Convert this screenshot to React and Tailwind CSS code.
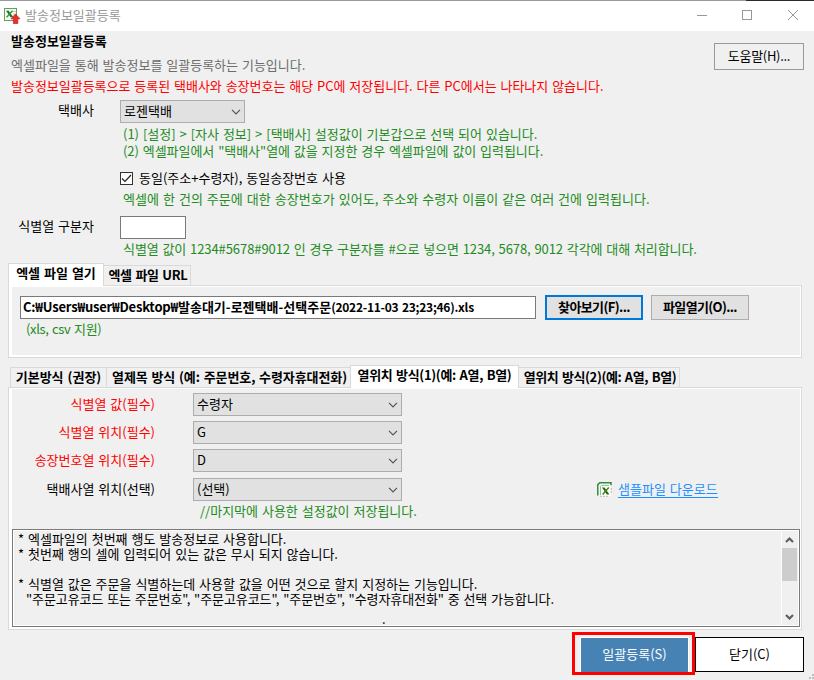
import React from "react";
import clsx from "clsx";

function Line({ className, children }) {
  return (
    <div className={clsx("h-4 leading-4 whitespace-pre", className)}>{children}</div>
  );
}

function Chevron() {
  return (
    <svg width="10" height="6" viewBox="0 0 10 6" fill="none" stroke="#555" strokeWidth="1.2">
      <path d="M1 0.8L5 4.8L9 0.8" />
    </svg>
  );
}

function Select({ className, children }) {
  return (
    <div
      className={clsx(
        "flex h-[23px] shrink-0 items-center justify-between border border-[#adadad] bg-[#e1e1e1] pr-[3px] pl-[3px]",
        className
      )}
    >
      <span className="pb-0.5">{children}</span>
      <Chevron />
    </div>
  );
}

function ExcelUploadIcon() {
  return (
    <svg width="17" height="17" viewBox="0 0 17 17">
      <rect x="0.5" y="0.5" width="12" height="12" fill="#f4faf2" stroke="#5ba35b" />
      <path d="M9 3.5h3M9 6h3" stroke="#b9d8b6" />
      <path d="M2 2.8H4.6L9.3 9.3H6.7Z" fill="#1f6b1f" />
      <path d="M8.6 2.8L2.6 9.3" stroke="#3f9440" strokeWidth="1.4" />
      <path d="M11.5 6L16 10.8H13.8V15.5H9.4V10.8H7Z" fill="#e5332a" stroke="#b5120d" strokeWidth="0.6" />
    </svg>
  );
}

function ExcelIcon() {
  return (
    <svg width="15" height="15" viewBox="0 0 15 15">
      <path d="M2.5 0.8H14V14H0.8V2.5Z" fill="#fff" />
      <path d="M0.8 13.5V2.6L2.8 0.8H14V3.2" fill="none" stroke="#2f8a3c" strokeWidth="1.5" />
      <path d="M3.4 13V4.4L4.6 3.3H12" fill="none" stroke="#7fb88a" />
      <path d="M5 5.5H7.6L12.4 12.6H9.8Z" fill="#2c6b10" />
      <path d="M11.8 5.5L5.6 12.6" stroke="#3f8420" strokeWidth="1.5" />
      <path d="M3 14.2H12M14.2 6V12" fill="none" stroke="#b5b5b5" strokeDasharray="2 1" />
    </svg>
  );
}

function FieldRow({ label, value, required, className }) {
  return (
    <div className={clsx("flex items-center", className)}>
      <span className={clsx("w-[143px] pb-0.5 text-right", required && "text-[#ff0000]")}>{label}</span>
      <Select className="ml-[38px] w-[209px]">{value}</Select>
    </div>
  );
}

function Tab({ active, className, children }) {
  return (
    <div
      className={clsx(
        "flex shrink-0 justify-center border border-b-0 border-[#d9d9d9] pt-px font-bold whitespace-pre",
        active ? "z-10 -mb-px bg-white" : "bg-[#f0f0f0]",
        className
      )}
    >
      {children}
    </div>
  );
}

export default function App() {
  return (
    <div className="flex h-[680px] w-[814px] flex-col overflow-hidden bg-[#f0f0f0] font-['Noto_Sans_CJK_KR',sans-serif] text-[13px] leading-4 [word-spacing:1px] text-black">
      <div className="flex h-px shrink-0">
        <div className="w-[746px] bg-[#999]" />
        <div className="flex-1 bg-[#2b2b2b]" />
      </div>
      <header className="flex h-[30px] shrink-0 items-center bg-white pl-1 text-[#999]">
        <ExcelUploadIcon />
        <span className="ml-1 pb-0.5">발송정보일괄등록</span>
        <svg className="ml-auto" width="118" height="30" viewBox="0 0 118 30" fill="none" stroke="#999">
          <path d="M1 14.5h10" />
          <rect x="46.5" y="9.5" width="9" height="9" />
          <path d="M92 9L102 19M102 9L92 19" />
        </svg>
      </header>

      <section className="flex h-[65px] shrink-0 justify-between pr-2.5 pl-[11px]">
        <div>
          <Line className="mt-0.5 font-bold">발송정보일괄등록</Line>
          <Line className="mt-2 text-[#6d6d6d]">엑셀파일을 통해 발송정보를 일괄등록하는 기능입니다.</Line>
          <Line className="mt-[5px] tracking-[-0.02px] text-[#ff0000]">
            발송정보일괄등록으로 등록된 택배사와 송장번호는 해당 PC에 저장됩니다. 다른 PC에서는 나타나지 않습니다.
          </Line>
        </div>
        <button className="mt-3 flex h-[27px] w-[90px] items-center justify-center border border-[#999] pb-px tracking-[-0.3px]">
          도움말(H)...
        </button>
      </section>

      <section className="h-[167px] shrink-0">
        <div className="flex pt-1">
          <Line className="mt-0.5 w-[94px] text-right">택배사</Line>
          <Select className="ml-[26px] w-[125px]">로젠택배</Select>
        </div>
        <div className="pl-[123px] text-[#228b22]">
          <Line className="mt-[3px]">(1) [설정] &gt; [자사 정보] &gt; [택배사] 설정값이 기본갑으로 선택 되어 있습니다.</Line>
          <Line className="mt-px tracking-[-0.04px]">(2) 엑셀파일에서 "택배사"열에 값을 지정한 경우 엑셀파일에 값이 입력됩니다.</Line>
        </div>
        <div className="mt-[11px] flex items-center pl-[120px]">
          <span className="flex size-[13px] items-center justify-center border border-[#333] bg-white">
            <svg width="11" height="11" viewBox="0 0 11 11" fill="none" stroke="#222" strokeWidth="1.2">
              <path d="M1 5.5L4 8.5L10 2" />
            </svg>
          </span>
          <Line className="ml-1.5">동일(주소+수령자), 동일송장번호 사용</Line>
        </div>
        <Line className="mt-[5px] pl-[123px] tracking-[0.04px] text-[#228b22]">
          엑셀에 한 건의 주문에 대한 송장번호가 있어도, 주소와 수령자 이름이 같은 여러 건에 입력됩니다.
        </Line>
        <div className="mt-[9px] flex">
          <Line className="mt-0.5 w-[94px] text-right">식별열 구분자</Line>
          <div className="ml-[26px] h-[23px] w-[66px] border border-[#7a7a7a] bg-white" />
        </div>
        <Line className="mt-0.5 pl-[123px] tracking-[-0.08px] text-[#228b22]">
          식별열 값이 1234#5678#9012 인 경우 구분자를 #으로 넣으면 1234, 5678, 9012 각각에 대해 처리합니다.
        </Line>
      </section>

      <section className="mr-3 ml-2 flex h-[95px] shrink-0 flex-col">
        <div className="flex h-[22px] shrink-0 items-end">
          <Tab active className="h-[23px] w-24">엑셀 파일 열기</Tab>
          <Tab className="-ml-px h-5 w-[88px] pl-0.5 tracking-[-0.3px]">엑셀 파일 URL</Tab>
        </div>
        <div className="flex-1 border border-[#d9d9d9] bg-white pt-px pr-px pb-0.5 pl-[3px]">
          <div className="h-full bg-[#f0f0f0] pt-2 pl-2">
            <div className="flex items-center">
              <div className="h-[23px] w-[516px] border border-[#7a7a7a] bg-white pt-0.5 pl-0.5 font-bold whitespace-pre">
                <span className="tracking-[-0.2px]">C:₩Users₩user₩Desktop₩</span>
                <span>발송대기-로젠택배-선택주문</span>
                <span className="text-xs leading-4 tracking-[-0.25px]">(2022-11-03 23;23;46).xls</span>
              </div>
              <button className="ml-[9px] h-[25px] w-[98px] border-2 border-[#0078d7] bg-[#e1e1e1] pb-px font-bold tracking-[-0.6px]">
                찾아보기(F)...
              </button>
              <button className="ml-2 h-[25px] w-[98px] border border-[#adadad] bg-[#e1e1e1] pb-px font-bold tracking-[-0.65px]">
                파일열기(O)...
              </button>
            </div>
            <Line className="mt-px pl-1.5 tracking-[-0.35px] text-[#228b22]">(xls, csv 지원)</Line>
          </div>
        </div>
      </section>

      <section className="mt-[7px] mr-3 ml-2 flex h-[265px] shrink-0 flex-col">
        <div className="flex h-[22px] shrink-0 items-end pl-0.5">
          <Tab className="h-5 w-[97px]">기본방식 (권장)</Tab>
          <Tab className="-ml-px h-5 w-[245px] pl-0.5 tracking-[-0.1px]">열제목 방식 (예: 주문번호, 수령자휴대전화)</Tab>
          <Tab active className="-ml-px h-[23px] w-[169px] tracking-[-0.33px]">열위치 방식(1)(예: A열, B열)</Tab>
          <Tab className="-ml-px h-5 w-[162px] pl-0.5 tracking-[-0.4px]">열위치 방식(2)(예: A열, B열)</Tab>
        </div>
        <div className="flex-1 border border-[#d9d9d9] bg-white pt-px pr-px pb-0.5 pl-[3px]">
          <div className="flex h-full flex-col bg-[#f0f0f0] pt-1">
            <div className="flex">
              <div className="w-[585px]">
                <FieldRow required label="식별열 값(필수)" value="수령자" />
                <FieldRow required className="mt-[5px]" label="식별열 위치(필수)" value="G" />
                <FieldRow required className="mt-[5px]" label="송장번호열 위치(필수)" value="D" />
                <FieldRow className="mt-1.5" label="택배사열 위치(선택)" value="(선택)" />
              </div>
              <a className="mt-[88px] flex h-4 items-center text-[#1e90ff]">
                <ExcelIcon />
                <span className="ml-1.5 border-b border-[#1e90ff] leading-4">샘플파일 다운로드</span>
              </a>
            </div>
            <Line className="mt-0.5 pl-[188px] text-[#228b22]">//마지막에 사용한 설정값이 저장됩니다.</Line>
            <div className="mt-auto flex h-[98px] w-[788px] shrink-0 border border-[#7a7a7a] bg-white p-px">
              <div className="flex-1 bg-[#f0f0f0] pl-1 leading-[15px] whitespace-pre">
                <p>* 엑셀파일의 첫번째 행도 발송정보로 사용합니다.</p>
                <p>* 첫번째 행의 셀에 입력되어 있는 값은 무시 되지 않습니다.</p>
                <p className="mt-[15px]">* 식별열 값은 주문을 식별하는데 사용할 값을 어떤 것으로 할지 지정하는 기능입니다.</p>
                <p className="pl-2 tracking-[-0.08px]">"주문고유코드 또는 주문번호", "주문고유코드", "주문번호", "수령자휴대전화" 중 선택 가능합니다.</p>
                <p className="mt-[5px] h-3.5 pl-[364px]">.</p>
              </div>
              <div className="ml-px flex w-4 flex-col items-start bg-[#f0f0f0]">
                <svg className="mt-[6px] ml-[3px]" width="9" height="6" viewBox="0 0 9 6" fill="none" stroke="#606060" strokeWidth="2.2">
                  <path d="M1 5L4.5 1.5L8 5" />
                </svg>
                <div className="mt-[5px] h-[33px] w-[15px] bg-[#cdcdcd]" />
                <svg className="mt-auto mb-[5px] ml-[3px]" width="9" height="6" viewBox="0 0 9 6" fill="none" stroke="#606060" strokeWidth="2.2">
                  <path d="M1 1L4.5 4.5L8 1" />
                </svg>
              </div>
            </div>
          </div>
        </div>
      </section>

      <footer className="flex flex-1 justify-end pt-[2px]">
        <div className="h-[43px] w-[123px] border-[3px] border-[#ff0000] bg-[#f0f0f0] pt-[2px] pl-[5px]">
          <button className="h-[35px] w-[109px] border border-b-0 border-white bg-[#4682b4] pb-0.5 text-white">
            일괄등록(S)
          </button>
        </div>
        <button className="mt-[5px] h-[35px] w-[109px] border border-black bg-white pb-0.5">닫기(C)</button>
        <svg className="mt-auto ml-[5px]" width="5" height="6" viewBox="0 0 5 6" fill="#bfbfbf">
          <rect x="3" y="0" width="2" height="2" />
          <rect x="0" y="3" width="2" height="2" />
          <rect x="3" y="3" width="2" height="2" />
        </svg>
      </footer>
    </div>
  );
}
